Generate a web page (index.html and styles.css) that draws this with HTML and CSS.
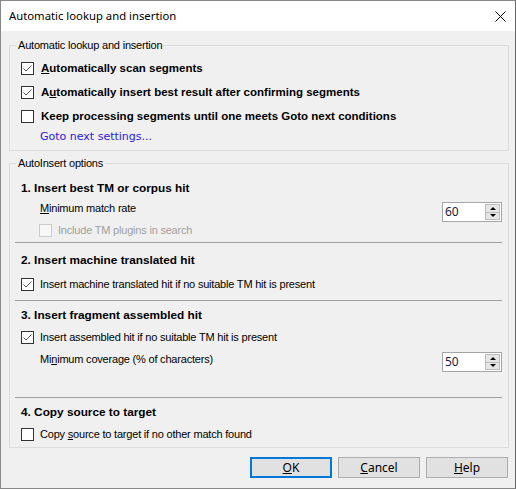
FILE: index.html
```html
<!DOCTYPE html>
<html>
<head>
<meta charset="utf-8">
<link rel="stylesheet" href="styles.css">
</head>
<body>
<div class="window">
  <div class="titlebar">
    <span class="title">Automatic lookup and insertion</span>
    <svg class="close" width="11" height="11" viewBox="0 0 11 11"><path d="M0.5 0.5 L10.5 10.5 M10.5 0.5 L0.5 10.5" stroke="#000" stroke-width="1" fill="none"/></svg>
  </div>
  <div class="content">
    <div class="group g1">
      <span class="legend">Automatic lookup and insertion</span>
      <div class="crow bold">
        <span class="cb checked"><svg width="11" height="11" viewBox="0 0 11 11"><path d="M1.5 5.5 L4 8 L9.5 2.5" stroke="#5a5a5a" stroke-width="1" fill="none"/></svg></span>
        <span><u>A</u>utomatically scan segments</span>
      </div>
      <div class="crow bold">
        <span class="cb checked"><svg width="11" height="11" viewBox="0 0 11 11"><path d="M1.5 5.5 L4 8 L9.5 2.5" stroke="#5a5a5a" stroke-width="1" fill="none"/></svg></span>
        <span>A<u>u</u>tomatically insert best result after confirming segments</span>
      </div>
      <div class="crow bold">
        <span class="cb"></span>
        <span>Keep processing segments until one meets Goto next conditions</span>
      </div>
      <div class="link">Goto next settings...</div>
    </div>

    <div class="group g2">
      <span class="legend">AutoInsert options</span>
      <div class="heading h1">1. Insert best TM or corpus hit</div>
      <div class="frow r1">
        <span class="flabel"><u>M</u>inimum match rate</span>
        <div class="spin"><span class="val">60</span><span class="arrows"><span class="up"></span><span class="down"></span></span></div>
      </div>
      <div class="crow2 disabled">
        <span class="cb dis"></span>
        <span>Include TM plugins in search</span>
      </div>
      <div class="sep s1"></div>
      <div class="heading h2">2. Insert machine translated hit</div>
      <div class="crow2 c2">
        <span class="cb checked"><svg width="11" height="11" viewBox="0 0 11 11"><path d="M1.5 5.5 L4 8 L9.5 2.5" stroke="#5a5a5a" stroke-width="1" fill="none"/></svg></span>
        <span>Insert machine translated hit if no suitable TM hit is present</span>
      </div>
      <div class="sep s2"></div>
      <div class="heading h3">3. Insert fragment assembled hit</div>
      <div class="crow2 c3">
        <span class="cb checked"><svg width="11" height="11" viewBox="0 0 11 11"><path d="M1.5 5.5 L4 8 L9.5 2.5" stroke="#5a5a5a" stroke-width="1" fill="none"/></svg></span>
        <span>Insert assembled hit if no suitable TM hit is present</span>
      </div>
      <div class="frow r2">
        <span class="flabel">Mi<u>n</u>imum coverage (% of characters)</span>
        <div class="spin"><span class="val">50</span><span class="arrows"><span class="up"></span><span class="down"></span></span></div>
      </div>
      <div class="sep s3"></div>
      <div class="heading h4">4. Copy source to target</div>
      <div class="crow2 c4">
        <span class="cb"></span>
        <span>Copy <u>s</u>ource to target if no other match found</span>
      </div>
    </div>

    <div class="buttons">
      <button class="btn default"><u>O</u>K</button>
      <button class="btn"><u>C</u>ancel</button>
      <button class="btn"><u>H</u>elp</button>
    </div>
  </div>
</div>
</body>
</html>
```
FILE: styles.css
```css
* { box-sizing: border-box; }
html, body { margin: 0; padding: 0; background: #f0f0f0; }
body { font-family: "Liberation Sans", Arial, sans-serif; font-size: 11px; letter-spacing: -0.2px; color: #000; }

.window {
  width: 516px;
  height: 489px;
  border: 1px solid #888;
  border-right-color: #666;
  background: #f0f0f0;
  display: flex;
  flex-direction: column;
}

.titlebar {
  height: 30px;
  background: #fff;
  display: flex;
  align-items: center;
  padding-left: 8px;
  padding-right: 9px;
  flex: none;
}
.title {
  font-family: "Noto Sans", sans-serif;
  font-size: 11.3px;
  letter-spacing: 0;
  flex: 1;
  padding-bottom: 1px;
}
.close { display: block; }

.content {
  padding: 14px 6px 0 8px;
}

.group {
  position: relative;
  border: 1px solid #dcdcdc;
}
.legend {
  position: absolute;
  top: -8px;
  left: 6px;
  padding: 0 2px;
  background: #f0f0f0;
  line-height: 15px;
  font-size: 11px;
}
.g1 { height: 106px; padding-top: 10px; }
.g2 { height: 285px; margin-top: 12px; padding-top: 14px; }

.cb {
  width: 13px;
  height: 13px;
  border: 1px solid #333;
  background: #fff;
  flex: none;
  display: flex;
  align-items: center;
  justify-content: center;
}
.cb svg { display: block; }
.cb.dis { border-color: #ccc; background: #f7f7f7; }

.crow {
  display: flex;
  align-items: center;
  height: 24px;
  padding-left: 11px;
  gap: 7px;
}
.bold { font-weight: bold; font-size: 11.5px; letter-spacing: 0; }

.link {
  height: 18px;
  line-height: 18px;
  padding-left: 30px;
  color: #2b18df;
  font-family: "DejaVu Sans", sans-serif;
  font-size: 11px;
  letter-spacing: 0;
}

.heading {
  height: 20px;
  line-height: 20px;
  padding-left: 11px;
  font-weight: bold;
  font-size: 11.8px;
  letter-spacing: 0;
}
.h2 { margin-top: 7px; }
.h3 { margin-top: 4px; }
.h4 { margin-top: 4px; }

.frow {
  display: flex;
  align-items: flex-start;
  padding-left: 30px;
  padding-right: 6px;
}
.r1 { height: 24px; }
.r1 .flabel { line-height: 20px; }
.r1 .spin { margin-top: 4px; }
.r2 { height: 26px; }
.r2 .flabel { line-height: 20px; margin-top: 2px; }
.r2 .spin { margin-top: 5px; }

.spin {
  margin-left: auto;
  width: 60px;
  height: 20px;
  border: 1px solid #a5a5a5;
  background: #fff;
  display: flex;
  padding: 1px;
}
.spin .val {
  flex: 1;
  font-family: "Noto Sans", sans-serif;
  font-size: 12px;
  letter-spacing: 0;
  line-height: 16px;
  padding-left: 1px;
  color: #1a1a3a;
}
.arrows {
  width: 15px;
  display: flex;
  flex-direction: column;
  border: 1px solid #bcbcbc;
  background: #e6e6e6;
}
.arrows span {
  flex: 1;
  display: flex;
  align-items: center;
  justify-content: center;
}
.arrows .up { border-bottom: 1px solid #bcbcbc; }
.arrows .up::before {
  content: "";
  border-left: 3px solid transparent;
  border-right: 3px solid transparent;
  border-bottom: 3px solid #000;
}
.arrows .down::before {
  content: "";
  border-left: 3px solid transparent;
  border-right: 3px solid transparent;
  border-top: 3px solid #000;
}

.crow2 {
  display: flex;
  align-items: center;
  height: 20px;
  padding-left: 11px;
  gap: 6px;
}
.disabled { height: 16px; padding-left: 29px; gap: 6px; color: #a0a0a0; }
.c2 { margin-top: 4px; }
.c3 { margin-top: 2px; }
.c4 { margin-top: 2px; }

.sep {
  height: 1px;
  background: #a0a0a0;
  margin-left: 5px;
  margin-right: 6px;
}
.s1 { margin-top: 4px; }
.s2 { margin-top: 6px; }
.s3 { margin-top: 24px; }

.buttons {
  display: flex;
  justify-content: flex-end;
  gap: 6px;
  margin-top: 9px;
  margin-right: 1px;
}
.btn {
  width: 82px;
  height: 21px;
  border: 1px solid #adadad;
  background: #e1e1e1;
  font-family: "Noto Sans", sans-serif;
  font-size: 12px;
  letter-spacing: 0;
  padding: 0;
  color: #000;
  line-height: 17px;
}
.btn.default { border: 2px solid #0078d7; }
```
